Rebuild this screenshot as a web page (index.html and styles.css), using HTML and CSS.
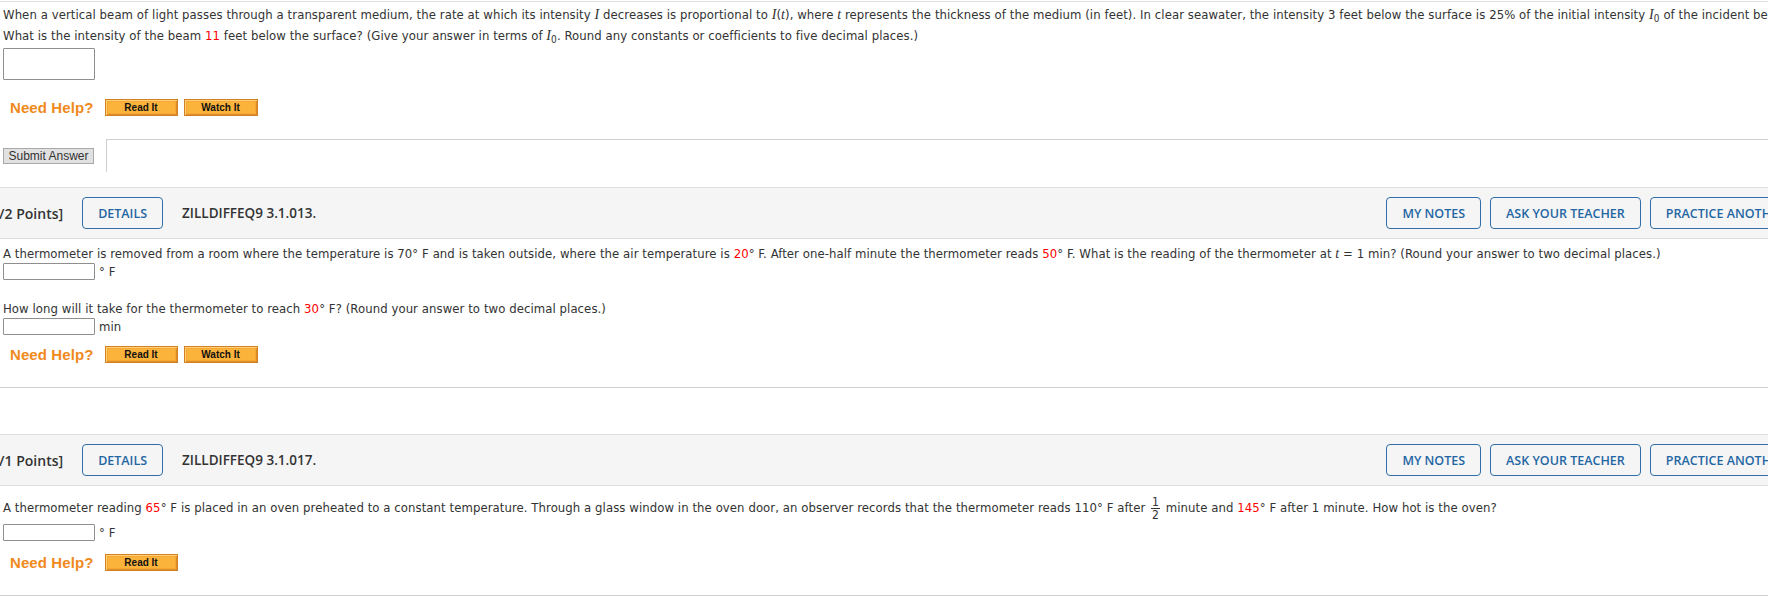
FILE: index.html
```html
<!DOCTYPE html>
<html>
<head>
<meta charset="utf-8">
<title>Questions</title>
<link rel="stylesheet" href="styles.css">
</head>
<body>
<div class="page">
  <section class="qbody prev">
    <p class="qtext first">When a vertical beam of light passes through a transparent medium, the rate at which its intensity <i class="m">I</i> decreases is proportional to <i class="m">I</i>(<i class="m">t</i>), where <i class="m">t</i> represents the thickness of the medium (in feet). In clear seawater, the intensity 3 feet below the surface is 25% of the initial intensity <i class="m">I</i><sub>0</sub> of the incident beam.<br>What is the intensity of the beam <span class="red">11</span> feet below the surface? (Give your answer in terms of <i class="m">I</i><sub>0</sub>. Round any constants or coefficients to five decimal places.)</p>
    <div class="ans-big"><input class="field field-lg" type="text"></div>
    <div class="help">
      <span class="help-label">Need Help?</span>
      <button class="help-btn">Read It</button>
      <button class="help-btn">Watch It</button>
    </div>
    <div class="submit-row">
      <button class="submit">Submit Answer</button>
      <div class="submit-frame"></div>
    </div>
  </section>

  <section class="question">
    <div class="qhead">
      <span class="points">[-/2 Points]</span>
      <button class="hbtn">DETAILS</button>
      <span class="qid">ZILLDIFFEQ9 3.1.013.</span>
      <div class="hright">
        <button class="hbtn">MY NOTES</button>
        <button class="hbtn">ASK YOUR TEACHER</button>
        <button class="hbtn">PRACTICE ANOTHER</button>
      </div>
    </div>
    <div class="qbody q2">
      <p class="qtext">A thermometer is removed from a room where the temperature is 70° F and is taken outside, where the air temperature is <span class="red">20</span>° F. After one-half minute the thermometer reads <span class="red">50</span>° F. What is the reading of the thermometer at <i class="m">t</i> = 1 min? (Round your answer to two decimal places.)</p>
      <div class="ans"><input class="field" type="text"><span class="unit">° F</span></div>
      <p class="qtext gap">How long will it take for the thermometer to reach <span class="red">30</span>° F? (Round your answer to two decimal places.)</p>
      <div class="ans"><input class="field" type="text"><span class="unit">min</span></div>
      <div class="help help-q2">
        <span class="help-label">Need Help?</span>
        <button class="help-btn">Read It</button>
        <button class="help-btn">Watch It</button>
      </div>
    </div>
  </section>

  <section class="question q3wrap">
    <div class="qhead">
      <span class="points">[-/1 Points]</span>
      <button class="hbtn">DETAILS</button>
      <span class="qid">ZILLDIFFEQ9 3.1.017.</span>
      <div class="hright">
        <button class="hbtn">MY NOTES</button>
        <button class="hbtn">ASK YOUR TEACHER</button>
        <button class="hbtn">PRACTICE ANOTHER</button>
      </div>
    </div>
    <div class="qbody q3">
      <p class="qtext frac-line">A thermometer reading <span class="red">65</span>° F is placed in an oven preheated to a constant temperature. Through a glass window in the oven door, an observer records that the thermometer reads 110° F after <span class="frac"><span class="num">1</span><span class="den">2</span></span> minute and <span class="red">145</span>° F after 1 minute. How hot is the oven?</p>
      <div class="ans"><input class="field" type="text"><span class="unit">° F</span></div>
      <div class="help help-q3">
        <span class="help-label">Need Help?</span>
        <button class="help-btn">Read It</button>
      </div>
    </div>
  </section>
</div>
</body>
</html>
```

FILE: styles.css
```css
html, body {
  margin: 0;
  padding: 0;
  background: #fff;
  overflow: hidden;
}

.page {
  width: 1812px;
  font-family: "DejaVu Sans Condensed", "DejaVu Sans", sans-serif;
  font-size: 13px;
  letter-spacing: 0.07px;
  color: #333;
}

.prev {
  margin-top: 1px;
  border-top: 1px solid #e0e0e0;
  padding-left: 3px;
}

.qtext {
  margin: 0;
  line-height: 18px;
  white-space: nowrap;
}

.qtext.first {
  padding-top: 2px;
  line-height: 21px;
}

.qtext sub {
  font-size: 10px;
  line-height: 0;
  vertical-align: -3px;
}

.m {
  font-family: "Liberation Serif", serif;
  font-style: italic;
  font-size: 14px;
}

.red {
  color: #f00;
}

.ans-big {
  margin-top: 2px;
  height: 32px;
}

.field {
  box-sizing: border-box;
  width: 92px;
  height: 17px;
  margin: 0;
  padding: 0;
  border: 1px solid #8f8f8f;
  border-radius: 1px;
  background: #fff;
  vertical-align: top;
}

.field-lg {
  height: 32px;
}

.help {
  display: flex;
  align-items: center;
  height: 21px;
  margin-top: 17px;
  padding-left: 7px;
}

.help-label {
  font-family: "Liberation Sans", Arial, sans-serif;
  font-weight: bold;
  font-size: 15px;
  letter-spacing: 0.1px;
  color: #f0891c;
  margin-right: 11px;
}

.help-btn {
  box-sizing: border-box;
  height: 17px;
  padding: 0;
  margin-right: 6px;
  border: 1px solid #d47f22;
  background: #fcb33c;
  box-shadow: inset 1px 1px 0 #ffd27a, inset -1px -1px 0 #dc8e2a, inset 0 0 0 2px #f6a832;
  font-family: "Liberation Sans", Arial, sans-serif;
  font-weight: bold;
  font-size: 10px;
  letter-spacing: 0;
  color: #111;
  line-height: 13px;
  width: 73px;
}

.help-btn + .help-btn {
  width: 74px;
}

.submit-row {
  display: flex;
  align-items: flex-start;
  margin-top: 21px;
  height: 33px;
}

.submit {
  box-sizing: border-box;
  margin-top: 9px;
  width: 91px;
  height: 16px;
  padding: 0;
  border: 1px solid #a9a9a9;
  background: #e1e1e1;
  font-family: "Liberation Sans", Arial, sans-serif;
  font-size: 12px;
  letter-spacing: 0;
  color: #333;
  line-height: 14px;
}

.submit-frame {
  flex: 1;
  margin-left: 12px;
  height: 32px;
  border-top: 1px solid #cfcfcf;
  border-left: 1px solid #cfcfcf;
}

.question {
  margin-top: 15px;
}

.q3wrap {
  margin-top: 0;
}

.qhead {
  display: flex;
  align-items: center;
  gap: 19px;
  height: 50px;
  border-top: 1px solid #dedede;
  border-bottom: 1px solid #dedede;
  background: #f5f5f5;
  font-family: "Open Sans", sans-serif;
  font-weight: 600;
  font-size: 14px;
  letter-spacing: 0;
  color: #333;
}

.qid {
  font-size: 13.5px;
}

.points {
  margin-left: -10px;
}

.hbtn {
  box-sizing: border-box;
  height: 32px;
  padding: 0 15px;
  border: 1px solid #2f6ea7;
  border-radius: 4px;
  background: transparent;
  font-family: "Open Sans", sans-serif;
  font-weight: 600;
  font-size: 12.5px;
  color: #1f66a3;
}

.hright {
  display: flex;
  gap: 9px;
  margin-left: auto;
  padding-right: 10px;
}

.qbody.q2,
.qbody.q3 {
  padding-left: 3px;
}

.q2 {
  padding-top: 6px;
  padding-bottom: 22px;
  border-bottom: 1px solid #d0d0d0;
  margin-bottom: 46px;
}

.ans {
  height: 19px;
  white-space: nowrap;
}

.unit {
  margin-left: 4px;
  line-height: 18px;
}

.qtext.gap {
  margin-top: 18px;
}

.help-q2 {
  margin-top: 7px;
}

.q3 {
  padding-top: 8px;
  padding-bottom: 22px;
  border-bottom: 1px solid #d0d0d0;
}

.frac-line {
  line-height: 28px;
  height: 30px;
}

.frac {
  display: inline-flex;
  flex-direction: column;
  align-items: center;
  vertical-align: middle;
  margin: 0 2px;
  font-size: 12px;
  line-height: 12px;
}

.frac .num {
  padding: 0 1px;
  border-bottom: 1px solid #333;
}

.help-q3 {
  margin-top: 9px;
}
```
